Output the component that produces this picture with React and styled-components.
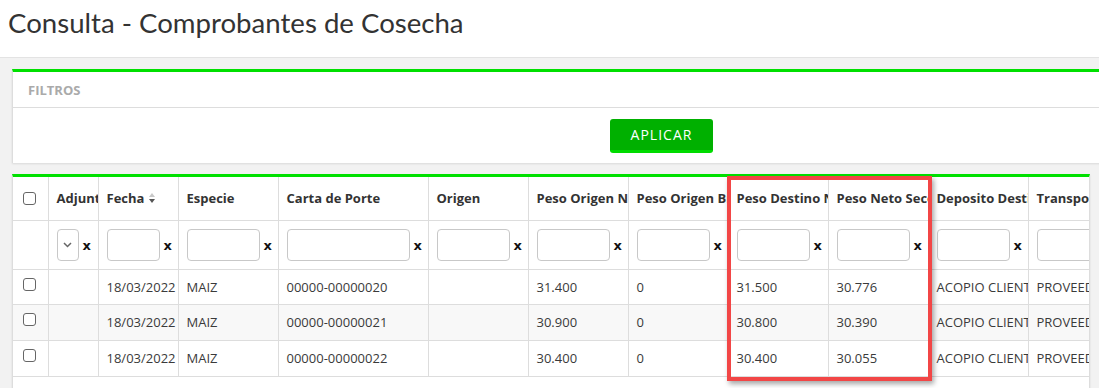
import React from 'react'
import styled, { createGlobalStyle } from 'styled-components'

const GlobalStyle = createGlobalStyle`
  body {
    margin: 0;
    background: #f2f2f2;
    font-family: "Open Sans", "Liberation Sans", sans-serif;
    overflow: hidden;
  }
`

const Header = styled.div`
  background: #fff;
  height: 58px;
  border-bottom: 1px solid #e3e3e3;
  padding: 0 8px;
  box-sizing: border-box;
`

const Title = styled.h1`
  margin: 0;
  padding-top: 5px;
  font-family: Lato, "Open Sans", sans-serif;
  font-size: 27.6px;
  font-weight: 400;
  color: #333;
  line-height: 36px;
`

const Content = styled.div`
  padding: 11px 0 0 12px;
  display: flex;
  flex-direction: column;
  gap: 11px;
`

const Panel = styled.div`
  width: ${({ $width }) => $width}px;
  background: #fff;
  border-top: 3px solid #00e000;
  border-left: 1px solid #ddd;
  border-right: 1px solid #ddd;
  box-shadow: 0 1px 2px rgba(0, 0, 0, 0.1);
  box-sizing: border-box;
  position: relative;
`

const PanelHeading = styled.div`
  height: 35px;
  display: flex;
  align-items: center;
  padding: 0 15px;
  font-size: 13px;
  font-weight: 700;
  color: #aaa;
  border-bottom: 1px solid #ddd;
`

const PanelBody = styled.div`
  height: 55px;
  display: flex;
  align-items: center;
  justify-content: center;
`

const ApplyButton = styled.button`
  width: 103px;
  height: 34px;
  background: #00b000;
  border: none;
  border-bottom: 3px solid #00dc00;
  border-radius: 3px;
  color: #fff;
  font-family: "Open Sans", sans-serif;
  font-size: 14px;
  letter-spacing: 1px;
  padding: 0;
  cursor: pointer;
`

const Scroller = styled.div`
  overflow: hidden;
`

const Table = styled.table`
  border-collapse: collapse;
  table-layout: fixed;
  width: 1115px;
  color: #444;
`

const Th = styled.th`
  height: 43px;
  text-align: left;
  font-weight: 700;
  font-size: 13px;
  color: #333;
  padding: 0 0 0 8px;
  border-right: 1px solid #ddd;
  border-bottom: 1px solid #ddd;
  white-space: nowrap;
  overflow: hidden;
  box-sizing: border-box;
`

const FilterCell = styled.td`
  height: 47px;
  padding: 1px 4px 0 8px;
  border-right: 1px solid #ddd;
  border-bottom: 1px solid #ddd;
  overflow: hidden;
`

const FilterWrap = styled.div`
  display: flex;
  align-items: center;
  gap: 4px;
`

const FilterInput = styled.div`
  flex: 0 0 auto;
  width: ${({ $w }) => $w}px;
  height: 32px;
  border: 1px solid #c8c8c8;
  border-radius: 4px;
  box-sizing: border-box;
  display: flex;
  align-items: center;
  justify-content: center;
`

const Clear = styled.span`
  font-weight: 700;
  font-size: 13px;
  color: #111;
  font-family: "DejaVu Sans", sans-serif;
`

const Row = styled.tr`
  background: ${({ $alt }) => ($alt ? '#f8f8f8' : '#fff')};
`

const Td = styled.td`
  height: ${({ $h }) => $h}px;
  padding: 0 0 0 8px;
  border-right: 1px solid #ddd;
  border-bottom: 1px solid #ddd;
  white-space: nowrap;
  overflow: hidden;
  font-size: 13px;
  color: #3a3a3a;
`

const CheckCell = styled.td`
  height: ${({ $h }) => $h}px;
  padding: 8px 0 0 10px;
  vertical-align: top;
  border-right: 1px solid #ddd;
  border-bottom: 1px solid #ddd;
  box-sizing: border-box;
`

const CheckTh = styled.th`
  padding: 0 0 0 10px;
  border-right: 1px solid #ddd;
  border-bottom: 1px solid #ddd;
`

const Box = styled.span`
  display: block;
  width: 13px;
  height: 13px;
  border: 1px solid #666;
  border-radius: 3px;
  box-sizing: border-box;
  background: #fff;
`

const Sort = styled.span`
  display: inline-flex;
  flex-direction: column;
  vertical-align: middle;
  margin-left: 5px;
  margin-top: -4px;
  gap: 2px;
`

const Tri = styled.span`
  width: 0;
  height: 0;
  border-left: 3.5px solid transparent;
  border-right: 3.5px solid transparent;
  ${({ $up }) => ($up ? 'border-bottom: 4px solid #c8c8c8;' : 'border-top: 4px solid #555;')}
`

const Highlight = styled.div`
  position: absolute;
  left: 714px;
  top: -1px;
  width: 205px;
  height: 205px;
  border: 4px solid #f24646;
  box-sizing: border-box;
  box-shadow: 2px 3px 5px rgba(0, 0, 0, 0.35);
  pointer-events: none;
`

const Bottom = styled.div`
  height: 40px;
`

const columns = [
  { key: 'check', width: 35 },
  { key: 'adj', title: 'Adjuntos', width: 50 },
  { key: 'fecha', title: 'Fecha', width: 80, sort: true },
  { key: 'especie', title: 'Especie', width: 100 },
  { key: 'carta', title: 'Carta de Porte', width: 150 },
  { key: 'origen', title: 'Origen', width: 100 },
  { key: 'pon', title: 'Peso Origen Neto', width: 100 },
  { key: 'pob', title: 'Peso Origen Bruto', width: 100 },
  { key: 'pd', title: 'Peso Destino Neto', width: 100 },
  { key: 'pns', title: 'Peso Neto Seco', width: 100 },
  { key: 'dep', title: 'Deposito Destino', width: 100 },
  { key: 'trans', title: 'Transportista', width: 100 },
]

const rows = [
  { fecha: '18/03/2022', especie: 'MAIZ', carta: '00000-00000020', origen: '', pon: '31.400', pob: '0', pd: '31.500', pns: '30.776', dep: 'ACOPIO CLIENTE', trans: 'PROVEEDOR', h: 34 },
  { fecha: '18/03/2022', especie: 'MAIZ', carta: '00000-00000021', origen: '', pon: '30.900', pob: '0', pd: '30.800', pns: '30.390', dep: 'ACOPIO CLIENTE', trans: 'PROVEEDOR', h: 35 },
  { fecha: '18/03/2022', especie: 'MAIZ', carta: '00000-00000022', origen: '', pon: '30.400', pob: '0', pd: '30.400', pns: '30.055', dep: 'ACOPIO CLIENTE', trans: 'PROVEEDOR', h: 35 },
]

const Chevron = () => (
  <svg width="9" height="6" viewBox="0 0 9 6">
    <path d="M1 1l3.5 3.5L8 1" fill="none" stroke="#666" strokeWidth="1.5" />
  </svg>
)

const App = () => {
  return (
    <>
      <GlobalStyle />
      <Header>
        <Title>Consulta - Comprobantes de Cosecha</Title>
      </Header>
      <Content>
        <Panel $width={1299}>
          <PanelHeading>FILTROS</PanelHeading>
          <PanelBody>
            <ApplyButton>APLICAR</ApplyButton>
          </PanelBody>
        </Panel>
        <Panel $width={1078}>
          <Scroller>
            <Table>
              <colgroup>
                {columns.map((c) => (
                  <col key={c.key} style={{ width: c.width }} />
                ))}
              </colgroup>
              <thead>
                <tr>
                  <CheckTh><Box /></CheckTh>
                  {columns.slice(1).map((c) => (
                    <Th key={c.key}>
                      {c.title}
                      {c.sort && (
                        <Sort>
                          <Tri $up />
                          <Tri />
                        </Sort>
                      )}
                    </Th>
                  ))}
                </tr>
                <tr>
                  <FilterCell />
                  <FilterCell>
                    <FilterWrap>
                      <FilterInput $w={22}><Chevron /></FilterInput>
                      <Clear>x</Clear>
                    </FilterWrap>
                  </FilterCell>
                  {columns.slice(2).map((c) => (
                    <FilterCell key={c.key}>
                      <FilterWrap>
                        <FilterInput $w={c.width - 27} />
                        <Clear>x</Clear>
                      </FilterWrap>
                    </FilterCell>
                  ))}
                </tr>
              </thead>
              <tbody>
                {rows.map((r, i) => (
                  <Row key={i} $alt={i === 1}>
                    <CheckCell $h={r.h}><Box /></CheckCell>
                    <Td $h={r.h} />
                    {columns.slice(2).map((c) => (
                      <Td key={c.key} $h={r.h}>{r[c.key]}</Td>
                    ))}
                  </Row>
                ))}
              </tbody>
            </Table>
            <Bottom />
          </Scroller>
          <Highlight />
        </Panel>
      </Content>
    </>
  )
}

export default App
